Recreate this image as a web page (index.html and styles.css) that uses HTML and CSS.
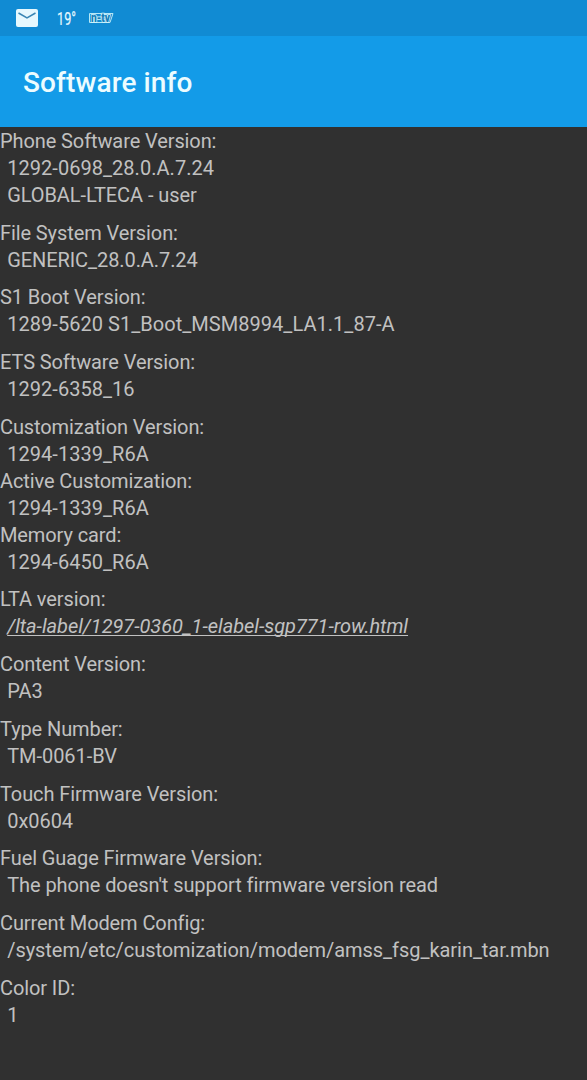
FILE: index.html
```html
<!DOCTYPE html>
<html lang="en">
<head>
<meta charset="utf-8">
<title>Software info</title>
<link rel="stylesheet" href="styles.css">
</head>
<body>
<header class="status">
<svg class="mail" viewBox="0 0 22 18"><rect width="22" height="18" rx="2" fill="#e6f8fe"/><path d="M2.500 4L11 9L19.500 4" fill="none" stroke="#3a86b4" stroke-width="1.500"/></svg>
<svg class="temp" viewBox="0 0 22 24"><text x="0" y="18.500" textLength="19" lengthAdjust="spacingAndGlyphs" class="temp-text">19°</text></svg>
<svg class="ntv" viewBox="0 0 27 14"><path d="M1.500 2.500H25L22 11.500H1.500Z" fill="none" stroke="#b5e8f7" stroke-width="1"/><text x="3" y="10.500" textLength="19" lengthAdjust="spacingAndGlyphs" class="ntv-text">n-tv</text></svg>
</header>
<div class="toolbar"><h1 class="title">Software info</h1></div>
<main class="info">
<section class="group"><h2 class="label">Phone Software Version:</h2><p class="value code">1292-0698_28.0.A.7.24</p><p class="value caps">GLOBAL-LTECA - user</p></section>
<section class="group"><h2 class="label">File System Version:</h2><p class="value caps">GENERIC_28.0.A.7.24</p></section>
<section class="group"><h2 class="label">S1 Boot Version:</h2><p class="value code">1289-5620 S1_Boot_MSM8994_LA1.1_87-A</p></section>
<section class="group"><h2 class="label">ETS Software Version:</h2><p class="value code">1292-6358_16</p></section>
<section class="group"><h2 class="label">Customization Version:</h2><p class="value code">1294-1339_R6A</p><h2 class="label">Active Customization:</h2><p class="value code">1294-1339_R6A</p><h2 class="label">Memory card:</h2><p class="value code">1294-6450_R6A</p></section>
<section class="group"><h2 class="label">LTA version:</h2><p class="value"><span class="link">/lta-label/1297-0360_1-elabel-sgp771-row.html</span></p></section>
<section class="group"><h2 class="label">Content Version:</h2><p class="value">PA3</p></section>
<section class="group"><h2 class="label">Type Number:</h2><p class="value">TM-0061-BV</p></section>
<section class="group"><h2 class="label">Touch Firmware Version:</h2><p class="value">0x0604</p></section>
<section class="group"><h2 class="label">Fuel Guage Firmware Version:</h2><p class="value caps">The phone doesn't support firmware version read</p></section>
<section class="group"><h2 class="label">Current Modem Config:</h2><p class="value">/system/etc/customization/modem/amss_fsg_karin_tar.mbn</p></section>
<section class="group"><h2 class="label">Color ID:</h2><p class="value">1</p></section>
</main>
</body>
</html>
```
FILE: styles.css
```css
* { box-sizing: border-box; }
body { margin: 0; height: 1080px; overflow: hidden; background: #303030; color: #c1c1c1; font-family: Roboto, sans-serif; }
.status { height: 36px; padding-left: 16px; display: flex; align-items: center; background: #118bd3; color: #e6f8fe; }
.mail { width: 22px; height: 18px; }
.temp { margin-left: 19px; width: 22px; height: 24px; overflow: visible; }
.temp-text { font-size: 18.5px; fill: #e6f8fe; stroke: #e6f8fe; stroke-width: 0.2px; }
.ntv { margin-left: 9px; width: 27px; height: 14px; }
.ntv-text { font: 900 12px Roboto, sans-serif; fill: #167fb9; stroke: #d4f5fc; stroke-width: 1.6px; paint-order: stroke; }
.toolbar { height: 91px; padding: 1px 0 0 23px; display: flex; align-items: center; background: #139be8; }
.title { margin: 0; color: #ecfcff; font-size: 28px; font-weight: 500; letter-spacing: 0.12px; }
.info { padding-top: 1px; }
.group { margin-bottom: 10.7px; }
.label, .value { margin: 0; font-size: 20px; line-height: 27px; font-weight: 400; white-space: nowrap; }
.label { letter-spacing: -0.1px; }
.value { padding-left: 7.2px; letter-spacing: -0.05px; }
.code { letter-spacing: 0.04px; }
.caps { letter-spacing: -0.08px; }
.link { font-style: italic; text-decoration: underline 1px; text-decoration-skip-ink: none; text-underline-offset: 2px; }
```
